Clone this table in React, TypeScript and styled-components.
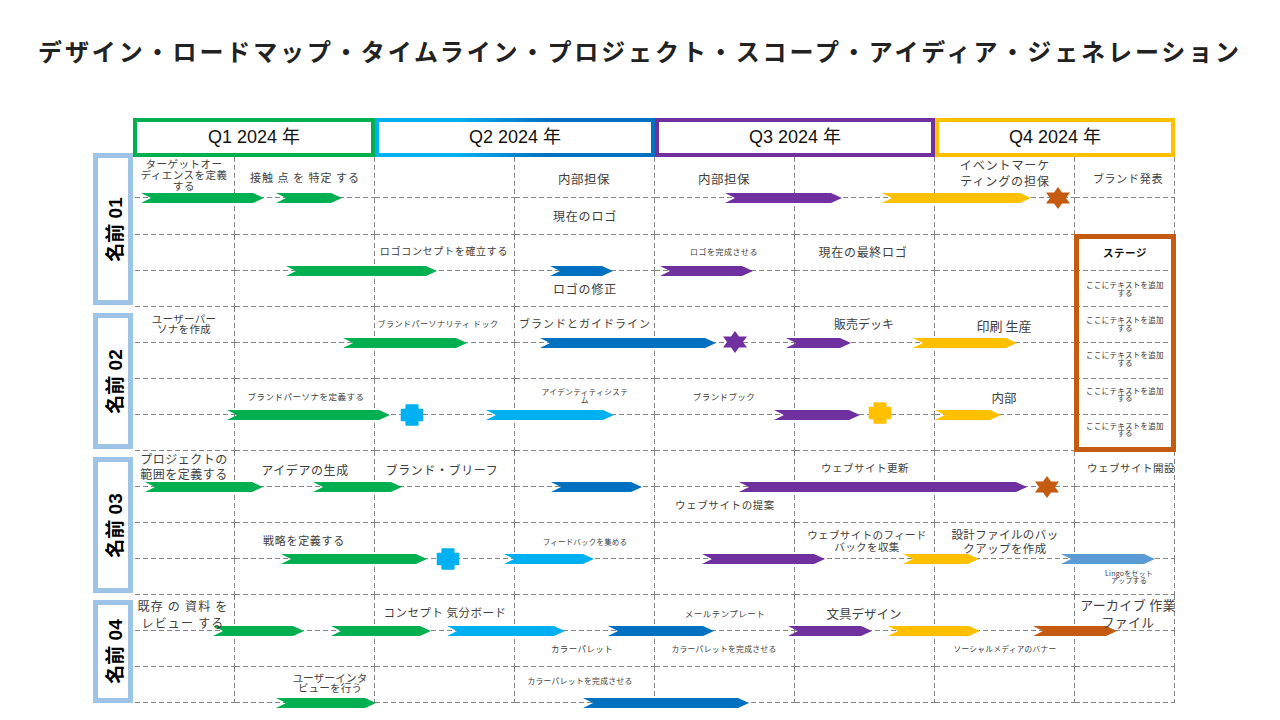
import React from 'react';
import styled, { createGlobalStyle } from 'styled-components';

const GlobalStyle = createGlobalStyle`
  html, body { margin: 0; padding: 0; background: #ffffff; }
  body { font-family: "Noto Sans CJK JP", "Noto Sans", sans-serif; color: #333; }
`;

const ORIGIN_X = 135;
const ORIGIN_Y = 157;

const G = '#00B050';
const C = '#00B0F0';
const B = '#0070C0';
const P = '#7030A0';
const Y = '#FFC000';
const O = '#C55A11';
const LB = '#5B9BD5';

type BarData = [number, number, number, string];
type Mark = { kind: 'star' | 'plus'; x: number; y: number; c: string };
type NoteData = { x: number; y: number; t: string; s: number; ls: number; lh?: number };

const quarters = [
  { label: 'Q1 2024 年', w: 242, c: G },
  { label: 'Q2 2024 年', w: 280, c: B, grad: true },
  { label: 'Q3 2024 年', w: 280, c: P },
  { label: 'Q4 2024 年', w: 240, c: Y },
];

const sections = [
  { name: '名前 01', h: 152, mb: 8 },
  { name: '名前 02', h: 136, mb: 8 },
  { name: '名前 03', h: 136, mb: 7 },
  { name: '名前 04', h: 103, mb: 0 },
];

const colWidths = [100, 140, 140, 140, 140, 140, 140, 100];
const rowHeights = [41, 37, 36, 36, 36, 36, 36, 36, 36, 36, 36, 36, 36, 36, 36];

const bars: BarData[] = [
  [141, 264, 198, G], [276, 342, 198, G], [725, 842, 198, P], [882, 1031, 198, Y],
  [286, 437, 271, G], [550, 613, 271, B], [660, 753, 271, P],
  [343, 467, 343, G], [540, 716, 343, B], [786, 851, 343, P], [913, 1017, 343, Y],
  [227, 390, 415, G], [486, 614, 415, C], [774, 860, 415, P], [935, 1001, 415, Y],
  [145, 263, 487, G], [313, 402, 487, G], [551, 642, 487, B], [739, 1027, 487, P],
  [281, 427, 559, G], [504, 594, 559, C], [702, 825, 559, P], [903, 979, 559, Y], [1061, 1155, 559, LB],
  [213, 304, 631, G], [331, 431, 631, G], [447, 565, 631, C], [608, 714, 631, B],
  [788, 872, 631, P], [888, 980, 631, Y], [1033, 1117, 631, O],
  [276, 376, 703, G], [583, 749, 703, B],
];

const marks: Mark[] = [
  { kind: 'star', x: 1058, y: 198, c: O },
  { kind: 'star', x: 735, y: 342, c: P },
  { kind: 'plus', x: 412, y: 415, c: C },
  { kind: 'plus', x: 880, y: 413, c: Y },
  { kind: 'star', x: 1047, y: 487, c: O },
  { kind: 'plus', x: 448, y: 559, c: C },
];

const notes: NoteData[] = [
  { x: 184, y: 174, t: 'ターゲットオー\nディエンスを定義\nする', s: 10.5, ls: 0.5, lh: 11 },
  { x: 305, y: 178, t: '接触 点 を 特定 する', s: 11, ls: 1 },
  { x: 584, y: 178, t: '内部担保', s: 12.5, ls: 0.5 },
  { x: 724, y: 178, t: '内部担保', s: 12.5, ls: 0.5 },
  { x: 1005, y: 173, t: 'イベントマーケ\nティングの担保', s: 12, ls: 0.9, lh: 16 },
  { x: 1128, y: 179, t: 'ブランド発表', s: 11, ls: 0.7 },
  { x: 585, y: 216, t: '現在のロゴ', s: 12, ls: 0.8 },
  { x: 444, y: 251, t: 'ロゴコンセプトを確立する', s: 10, ls: 0.7 },
  { x: 724, y: 252, t: 'ロゴを完成させる', s: 8, ls: 0.5 },
  { x: 863, y: 252, t: '現在の最終ロゴ', s: 12, ls: 0.7 },
  { x: 585, y: 289, t: 'ロゴの修正', s: 12, ls: 0.8 },

  { x: 184, y: 324, t: 'ユーザーパー\nソナを作成', s: 10.5, ls: 0.3, lh: 10 },
  { x: 438, y: 324, t: 'ブランドパーソナリティ ドック', s: 8, ls: 0.5 },
  { x: 585, y: 324, t: 'ブランドとガイドライン', s: 11, ls: 1 },
  { x: 864, y: 324, t: '販売デッキ', s: 12, ls: 0 },
  { x: 1004, y: 326, t: '印刷 生産', s: 13, ls: 0 },
  { x: 306, y: 396, t: 'ブランドパーソナを定義する', s: 8.5, ls: 0.5 },
  { x: 585, y: 396, t: 'アイデンティティシステ\nム', s: 7.5, ls: 0.5, lh: 8 },
  { x: 724, y: 396, t: 'ブランドブック', s: 8.5, ls: 0.4 },
  { x: 1004, y: 397, t: '内部', s: 12.5, ls: 0 },

  { x: 184, y: 466, t: 'プロジェクトの\n範囲を定義する', s: 12, ls: 0.5, lh: 15 },
  { x: 305, y: 470, t: 'アイデアの生成', s: 12, ls: 0.6 },
  { x: 442, y: 470, t: 'ブランド・ブリーフ', s: 12, ls: 0.6 },
  { x: 865, y: 468, t: 'ウェブサイト更新', s: 10.5, ls: 0.5 },
  { x: 1131, y: 468, t: 'ウェブサイト開設', s: 10.5, ls: 0.5 },
  { x: 725, y: 505, t: 'ウェブサイトの提案', s: 10.5, ls: 0.6 },
  { x: 304, y: 541, t: '戦略を定義する', s: 11, ls: 0.7 },
  { x: 585, y: 541, t: 'フィードバックを集める', s: 7.5, ls: 0.2 },
  { x: 867, y: 540, t: 'ウェブサイトのフィード\nバックを収集', s: 10.5, ls: 0.4, lh: 11.5 },
  { x: 1005, y: 541, t: '設計ファイルのバッ\nクアップを作成', s: 11.5, ls: 0.4, lh: 14 },
  { x: 1129, y: 577, t: 'Lingoをセット\nアップする', s: 7, ls: 0.2, lh: 7 },

  { x: 183, y: 614, t: '既存 の 資料 を\nレビュー する', s: 12, ls: 1.2, lh: 17 },
  { x: 445, y: 613, t: 'コンセプト 気分ボード', s: 11.5, ls: 0.5 },
  { x: 582, y: 648, t: 'カラーパレット', s: 8.5, ls: 0.4 },
  { x: 330, y: 683, t: 'ユーザーインタ\nビューを行う', s: 10.5, ls: 0.2, lh: 10 },
  { x: 580, y: 681, t: 'カラーパレットを完成させる', s: 7.8, ls: 0.3 },
  { x: 725, y: 613, t: 'メールテンプレート', s: 8.5, ls: 0.5 },
  { x: 864, y: 613, t: '文具デザイン', s: 12.5, ls: 0 },
  { x: 724, y: 649, t: 'カラーパレットを完成させる', s: 7.8, ls: 0.3 },
  { x: 1005, y: 649, t: 'ソーシャルメディアのバナー', s: 7.7, ls: 0.3 },
  { x: 1128, y: 613, t: 'アーカイブ 作業\nファイル', s: 13, ls: 0.3, lh: 17 },
];

const Page = styled.div`
  width: 1280px;
  height: 720px;
  overflow: hidden;
  background: #ffffff;
`;

const Title = styled.h1`
  margin: 0;
  padding-top: 37px;
  height: 28px;
  line-height: 28px;
  text-align: center;
  font-family: "Noto Sans CJK JP", sans-serif;
  font-size: 24px;
  font-weight: 700;
  letter-spacing: 2.9px;
  color: #222;
  white-space: nowrap;
`;

const Chart = styled.div`
  margin: 53px 0 0 93px;
  width: 1084px;
`;

const HeaderRow = styled.div`
  display: flex;
  margin-left: 40px;
  height: 39px;
`;

const Quarter = styled.div<{ $w: number; $c: string; $grad?: boolean }>`
  width: ${(p) => p.$w}px;
  box-sizing: border-box;
  border: 4px solid ${(p) => p.$c};
  ${(p) =>
    p.$grad
      ? 'border-image: linear-gradient(90deg, #00B0F0 0%, #00B0F0 28%, #0070C0 62%, #0070C0 100%) 1;'
      : ''}
  display: flex;
  align-items: center;
  justify-content: center;
  font-family: "Liberation Sans", "Noto Sans CJK JP", sans-serif;
  font-size: 18px;
  color: #111;
  padding-bottom: 5px;
`;

const Body = styled.div`
  display: flex;
  align-items: flex-start;
`;

const LabelColumn = styled.div`
  width: 40px;
  margin-top: -4px;
  display: flex;
  flex-direction: column;
`;

const SectionLabel = styled.div<{ $h: number; $mb: number }>`
  height: ${(p) => p.$h}px;
  margin-bottom: ${(p) => p.$mb}px;
  box-sizing: border-box;
  border: 5px solid #9DC3E6;
  background: #fff;
  display: flex;
  align-items: center;
  justify-content: center;
  overflow: visible;
`;

const SectionName = styled.span`
  flex-shrink: 0;
  transform: rotate(-90deg);
  white-space: nowrap;
  font-family: "Liberation Sans", "Noto Sans CJK JP", sans-serif;
  font-weight: 700;
  font-size: 19px;
  color: #000;
`;

const Board = styled.div`
  position: relative;
  margin-left: 2px;
  width: 1040px;
  height: 546px;
`;

const GridLines = styled.div`
  display: grid;
  grid-template-columns: ${colWidths.map((w) => `${w}px`).join(' ')};
  grid-template-rows: ${rowHeights.map((h) => `${h}px`).join(' ')};
`;

const Cell = styled.div`
  background-image: linear-gradient(to right, #858585 62%, transparent 62%),
    linear-gradient(to bottom, #858585 62%, transparent 62%);
  background-size: 8px 1px, 1px 8px;
  background-position: left bottom, right top;
  background-repeat: repeat-x, repeat-y;
`;

const Layer = styled.div`
  position: absolute;
  inset: 0;
  pointer-events: none;
`;

const Bar = styled.div<{ $c: string }>`
  position: absolute;
  height: 10px;
  background: ${(p) => p.$c};
  clip-path: polygon(0 0, calc(100% - 11px) 0, 100% 50%, calc(100% - 11px) 100%, 0 100%, 10px 50%);
`;

const MarkSvg = styled.svg`
  position: absolute;
  transform: translate(-50%, -50%);
  overflow: visible;
`;

const Note = styled.div<{ $s: number; $ls: number; $lh?: number }>`
  position: absolute;
  transform: translate(-50%, -50%);
  white-space: pre;
  text-align: center;
  font-family: "Noto Sans CJK JP", sans-serif;
  font-size: ${(p) => p.$s}px;
  letter-spacing: ${(p) => p.$ls}px;
  line-height: ${(p) => (p.$lh ? `${p.$lh}px` : '1.2')};
  color: #404040;
`;

const Stage = styled.div`
  position: absolute;
  left: 939px;
  top: 77px;
  width: 102px;
  height: 218px;
  box-sizing: border-box;
  border: 5px solid #C55A11;
  display: grid;
  grid-template-rows: 32px repeat(5, 1fr);
`;

const StageTitle = styled.div`
  display: flex;
  align-items: center;
  justify-content: center;
  padding-bottom: 6px;
  font-family: "Noto Sans CJK JP", sans-serif;
  font-weight: 700;
  font-size: 10.5px;
  letter-spacing: 0.5px;
  color: #111;
`;

const StageCell = styled.div`
  display: flex;
  align-items: center;
  justify-content: center;
  white-space: pre;
  text-align: center;
  font-family: "Noto Sans CJK JP", sans-serif;
  font-size: 7.5px;
  line-height: 7.5px;
  letter-spacing: 0.3px;
  color: #333;
`;

const Star = ({ x, y, c }: { x: number; y: number; c: string }) => (
  <MarkSvg
    width={24}
    height={22}
    viewBox="-10.4 -12 20.8 24"
    preserveAspectRatio="none"
    style={{ left: x - ORIGIN_X, top: y - ORIGIN_Y }}
  >
    <polygon
      points="0,-12 3.46,-6 10.39,-6 6.93,0 10.39,6 3.46,6 0,12 -3.46,6 -10.39,6 -6.93,0 -10.39,-6 -3.46,-6"
      fill={c}
    />
  </MarkSvg>
);

const Plus = ({ x, y, c }: { x: number; y: number; c: string }) => (
  <MarkSvg
    width={23}
    height={22}
    viewBox="0 0 22 22"
    preserveAspectRatio="none"
    style={{ left: x - ORIGIN_X, top: y - ORIGIN_Y }}
  >
    <path
      d="M5.5 1 H16.5 V5.5 H21 V16.5 H16.5 V21 H5.5 V16.5 H1 V5.5 H5.5 Z"
      fill={c}
      stroke={c}
      strokeWidth={1.6}
      strokeLinejoin="round"
    />
  </MarkSvg>
);

export default function App() {
  const cells = [];
  for (let r = 0; r < rowHeights.length; r++) {
    for (let c = 0; c < colWidths.length; c++) {
      cells.push(<Cell key={`${r}-${c}`} />);
    }
  }

  return (
    <Page>
      <GlobalStyle />
      <Title>デザイン・ロードマップ・タイムライン・プロジェクト・スコープ・アイディア・ジェネレーション</Title>
      <Chart>
        <HeaderRow>
          {quarters.map((q) => (
            <Quarter key={q.label} $w={q.w} $c={q.c} $grad={q.grad}>
              {q.label}
            </Quarter>
          ))}
        </HeaderRow>
        <Body>
          <LabelColumn>
            {sections.map((s) => (
              <SectionLabel key={s.name} $h={s.h} $mb={s.mb}>
                <SectionName>{s.name}</SectionName>
              </SectionLabel>
            ))}
          </LabelColumn>
          <Board>
            <GridLines>{cells}</GridLines>
            <Layer>
              {bars.map(([x1, x2, y, c], i) => (
                <Bar
                  key={`b${i}`}
                  $c={c}
                  style={{ left: x1 - ORIGIN_X, width: x2 - x1, top: y - ORIGIN_Y - 5 }}
                />
              ))}
              {marks.map((m, i) =>
                m.kind === 'star' ? (
                  <Star key={`m${i}`} x={m.x} y={m.y} c={m.c} />
                ) : (
                  <Plus key={`m${i}`} x={m.x} y={m.y} c={m.c} />
                )
              )}
              {notes.map((n, i) => (
                <Note
                  key={`n${i}`}
                  $s={n.s}
                  $ls={n.ls}
                  $lh={n.lh}
                  style={{ left: n.x - ORIGIN_X, top: n.y - ORIGIN_Y }}
                >
                  {n.t}
                </Note>
              ))}
              <Stage>
                <StageTitle>ステージ</StageTitle>
                {[0, 1, 2, 3, 4].map((i) => (
                  <StageCell key={`s${i}`}>{'ここにテキストを追加\nする'}</StageCell>
                ))}
              </Stage>
            </Layer>
          </Board>
        </Body>
      </Chart>
    </Page>
  );
}
